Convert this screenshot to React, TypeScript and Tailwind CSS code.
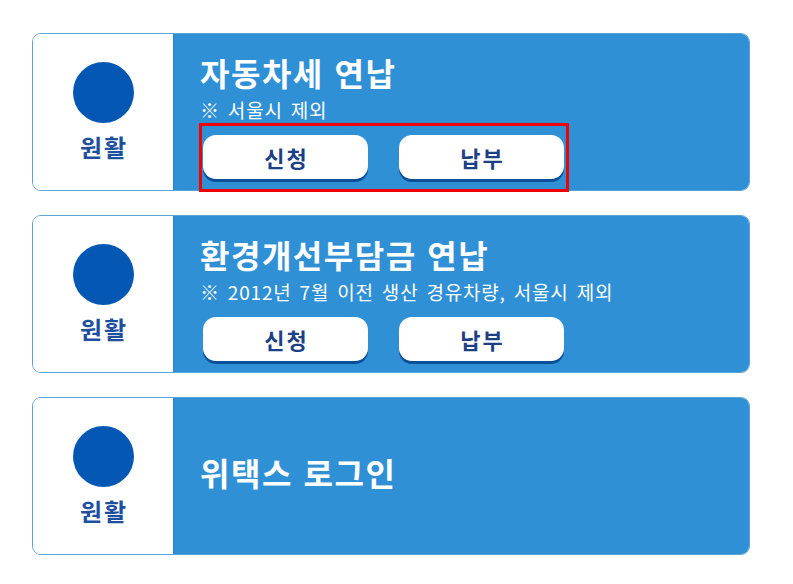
const font = { fontFamily: '"Noto Sans CJK KR", "Noto Sans", sans-serif' };

type Item = {
    title: string;
    note?: string;
    buttons?: string[];
    highlight?: boolean;
};

const items: Item[] = [
    { title: '자동차세 연납', note: '※ 서울시 제외', buttons: ['신청', '납부'], highlight: true },
    { title: '환경개선부담금 연납', note: '※ 2012년 7월 이전 생산 경유차량, 서울시 제외', buttons: ['신청', '납부'] },
    { title: '위택스 로그인' },
];

function Card({ item }: { item: Item }) {
    return (
        <div className="flex h-[158px] rounded-[9px] border border-[#5aa2da]">
            <div className="flex w-[140px] flex-col items-center rounded-l-[8px] bg-white pt-[28px]">
                <div className="h-[61px] w-[61px] rounded-full bg-[#0457b2]" />
                <p className="mt-[10px] pl-[2px] text-[24px] font-bold leading-[28px] tracking-[2px] text-[#1e4f9e]">원활</p>
            </div>
            {item.buttons ? (
                <div className="flex flex-1 flex-col rounded-r-[8px] border-l border-[#2a86cc] bg-[#2f90d6] pl-[26px] pt-[18px]">
                    <h3 className="h-[40px] text-[32px] font-bold leading-[40px] tracking-[1.5px] text-white [word-spacing:2px]">{item.title}</h3>
                    <p className="mt-[7px] h-[22px] text-[19px] leading-[22px] tracking-[0.8px] text-white [word-spacing:3px]">{item.note}</p>
                    <div className="relative mt-[14px] flex gap-[31px] pl-[3px]">
                        {item.buttons.map((b) => (
                            <button
                                key={b}
                                className="h-[44px] w-[165px] rounded-[13px] bg-white pl-[2px] text-[22px] font-bold tracking-[2px] text-[#1c3f86] shadow-[0_3px_0_#0b4f98]"
                            >
                                {b}
                            </button>
                        ))}
                        {item.highlight && (
                            <div className="pointer-events-none absolute -left-[1px] -top-[12px] h-[69px] w-[370px] border-[3px] border-[#f00000]" />
                        )}
                    </div>
                </div>
            ) : (
                <div className="flex flex-1 items-center rounded-r-[8px] border-l border-[#2a86cc] bg-[#2f90d6] pb-[8px] pl-[26px]">
                    <h3 className="text-[32px] font-bold leading-[40px] tracking-[1.5px] text-white [word-spacing:2px]">{item.title}</h3>
                </div>
            )}
        </div>
    );
}

export default function App() {
    return (
        <div className="h-[584px] w-[793px] bg-white" style={font}>
            <div className="flex w-[750px] flex-col gap-[24px] pl-[32px] pt-[33px]">
                {items.map((item) => (
                    <Card key={item.title} item={item} />
                ))}
            </div>
        </div>
    );
}
